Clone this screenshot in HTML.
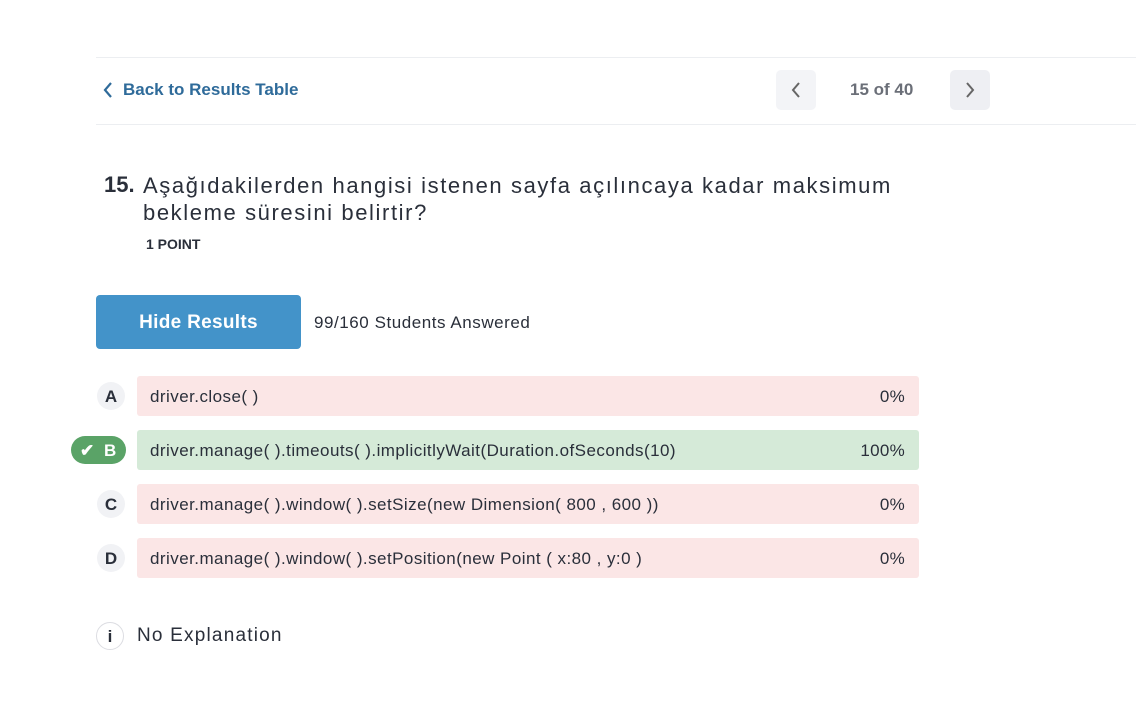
<!DOCTYPE html>
<html><head><style>
body{margin:0;width:1136px;height:703px;background:#fff;font-family:"Liberation Sans",sans-serif;position:relative;overflow:hidden;color:#2a2f3a}
.abs{position:absolute}
.hr{position:absolute;left:96px;right:0;height:1px;background:#eceef1}
.back{left:104px;top:80px;color:#2f6b9a;font-weight:bold;font-size:17px}
.nb{width:40px;height:40px;background:#f3f4f7;border-radius:5px;top:70px}
.row{position:absolute;left:137px;width:782px;height:40px;border-radius:3px;background:#fbe6e6;font-size:17px;line-height:41px;color:#2a2f3a}
.row span.t{position:absolute;left:13px;letter-spacing:0.45px}
.row span.p{position:absolute;right:14px;letter-spacing:0.3px}
.lt{position:absolute;left:97px;width:28px;height:28px;border-radius:50%;background:#f1f2f5;font-weight:bold;font-size:17px;text-align:center;line-height:29px}
</style></head><body>
<div class="hr" style="top:57px"></div>
<div class="hr" style="top:124px"></div>
<svg class="abs" style="left:102px;top:81px" width="12" height="18"><path d="M9 2 L3 9 L9 16" stroke="#2f6b9a" stroke-width="2.2" fill="none"/></svg>
<div class="abs back" style="left:123px">Back to Results Table</div>
<div class="abs nb" style="left:776px"><svg width="40" height="40"><path d="M23 13 L17 20 L23 27" stroke="#666" stroke-width="2" fill="none"/></svg></div>
<div class="abs" style="left:850px;top:80px;font-size:17px;font-weight:bold;color:#6b6f78">15 of 40</div>
<div class="abs nb" style="left:950px;background:#eeeff3"><svg width="40" height="40"><path d="M17 13 L23 20 L17 27" stroke="#666" stroke-width="2" fill="none"/></svg></div>
<div class="abs" style="left:104px;top:172px;font-size:22px;font-weight:bold">15.</div>
<div class="abs" style="left:143px;top:172px;font-size:22px;line-height:27px;width:900px;letter-spacing:1.6px">Aşağıdakilerden hangisi istenen sayfa açılıncaya kadar maksimum<br>bekleme süresini belirtir?</div>
<div class="abs" style="left:146px;top:236px;font-size:14px;font-weight:bold">1 POINT</div>
<div class="abs" style="left:96px;top:295px;width:205px;height:54px;background:#4393c9;border-radius:4px;color:#fff;font-size:19px;font-weight:bold;text-align:center;line-height:55px;letter-spacing:0.3px">Hide Results</div>
<div class="abs" style="left:314px;top:313px;font-size:17px;letter-spacing:0.55px">99/160 Students Answered</div>
<div class="lt" style="top:382px">A</div>
<div class="row" style="top:376px"><span class="t">driver.close( )</span><span class="p">0%</span></div>
<div class="abs" style="left:71px;top:436px;width:55px;height:28px;border-radius:14px;background:#5aa367;color:#fff;font-weight:bold;font-size:17px;line-height:29px"><span style="position:absolute;left:9px">✔</span><span style="position:absolute;left:33px">B</span></div>
<div class="row" style="top:430px;background:#d5ead8"><span class="t">driver.manage( ).timeouts( ).implicitlyWait(Duration.ofSeconds(10)</span><span class="p">100%</span></div>
<div class="lt" style="top:490px">C</div>
<div class="row" style="top:484px"><span class="t">driver.manage( ).window( ).setSize(new Dimension( 800 , 600 ))</span><span class="p">0%</span></div>
<div class="lt" style="top:544px">D</div>
<div class="row" style="top:538px"><span class="t">driver.manage( ).window( ).setPosition(new Point ( x:80 , y:0 )</span><span class="p">0%</span></div>
<div class="abs" style="left:96px;top:622px;width:26px;height:26px;border:1.5px solid #dcdde2;border-radius:50%;text-align:center;line-height:27px;font-weight:bold;font-size:17px">i</div>
<div class="abs" style="left:137px;top:625px;font-size:19px;letter-spacing:1.2px">No Explanation</div>
</body></html>
